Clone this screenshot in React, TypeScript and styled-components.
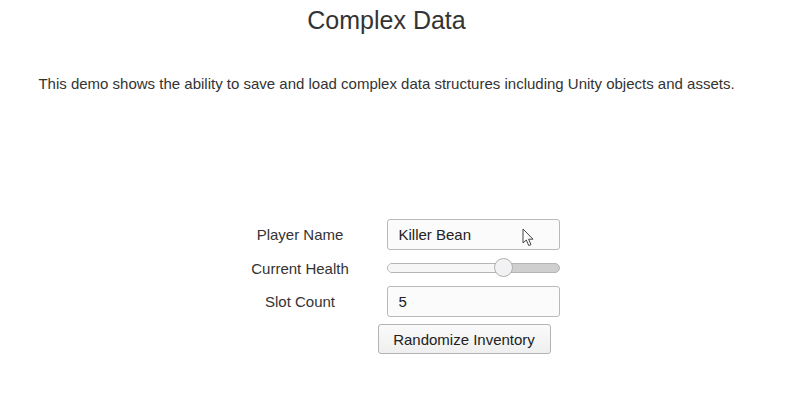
import React from 'react'
import styled, { createGlobalStyle } from 'styled-components'

const GlobalStyle = createGlobalStyle`
  html, body {
    margin: 0;
    padding: 0;
    background: #ffffff;
  }
  body {
    font-family: 'Liberation Sans', Arial, Helvetica, sans-serif;
    color: #333333;
  }
`

const health = 0.68

export default function App() {
  return (
    <>
      <GlobalStyle />
      <Page>
        <Title>Complex Data</Title>
        <Description>
          This demo shows the ability to save and load complex data structures including Unity objects and assets.
        </Description>
        <Form>
          <Label>Player Name</Label>
          <Field>
            <TextBox>Killer Bean</TextBox>
            <Cursor viewBox="0 0 13 19" width="13" height="19">
              <path
                d="M1 1 L1 15 L4.3 12 L6.8 17.6 L9 16.6 L6.6 11.2 L11 11.2 Z"
                fill="#ffffff"
                stroke="#444444"
                strokeWidth="1"
                strokeLinejoin="round"
              />
            </Cursor>
          </Field>
          <Label>Current Health</Label>
          <SliderField>
            <Track>
              <Fill style={{ width: `${health * 100}%` }} />
              <Thumb style={{ left: `${health * 100}%` }} />
            </Track>
          </SliderField>
          <Label>Slot Count</Label>
          <Field>
            <TextBox>5</TextBox>
          </Field>
          <span />
          <ButtonCell>
            <Button>Randomize Inventory</Button>
          </ButtonCell>
        </Form>
      </Page>
    </>
  )
}

const Page = styled.div`
  width: 773px;
  height: 412px;
  display: flex;
  flex-direction: column;
  align-items: center;
`

const Title = styled.h1`
  margin: 0;
  padding-top: 6px;
  font-size: 25px;
  font-weight: normal;
  line-height: 29px;
  color: #333333;
`

const Description = styled.p`
  margin: 40px 0 0;
  font-size: 15px;
  line-height: 18px;
  color: #333333;
`

const Form = styled.div`
  margin-top: 126px;
  display: grid;
  grid-template-columns: 173px 173px;
  row-gap: 4px;
  align-items: center;
`

const Label = styled.div`
  font-size: 15px;
  text-align: center;
  color: #333333;
`

const Field = styled.div`
  position: relative;
  display: flex;
  align-items: center;
`

const SliderField = styled(Field)`
  height: 28px;
`

const TextBox = styled.div`
  box-sizing: border-box;
  width: 173px;
  height: 31px;
  padding: 0 11px;
  border: 1px solid #b9b9b9;
  border-radius: 3px;
  background: #fbfbfb;
  font-size: 15px;
  line-height: 29px;
  color: #222222;
`

const Cursor = styled.svg`
  position: absolute;
  left: 135px;
  top: 9px;
`

const Track = styled.div`
  position: relative;
  box-sizing: border-box;
  width: 173px;
  height: 10px;
  border: 1px solid #b5b5b5;
  border-radius: 5px;
  background: #cfcfcf;
`

const Fill = styled.div`
  height: 100%;
  border-radius: 4px 0 0 4px;
  background: #f6f6f6;
`

const Thumb = styled.div`
  position: absolute;
  top: 50%;
  box-sizing: border-box;
  width: 19px;
  height: 19px;
  margin: -10px 0 0 -10px;
  border: 1px solid #b0b0b0;
  border-radius: 50%;
  background: #f2f2f4;
`

const ButtonCell = styled.div`
  padding-top: 3px;
  margin-left: -9px;
`

const Button = styled.button`
  box-sizing: border-box;
  width: 173px;
  height: 30px;
  border: 1px solid #b3b3b3;
  border-radius: 3px;
  background: linear-gradient(#fafafa, #efefef);
  font-family: 'Liberation Sans', Arial, Helvetica, sans-serif;
  font-size: 15px;
  color: #222222;
  padding: 0;
`
